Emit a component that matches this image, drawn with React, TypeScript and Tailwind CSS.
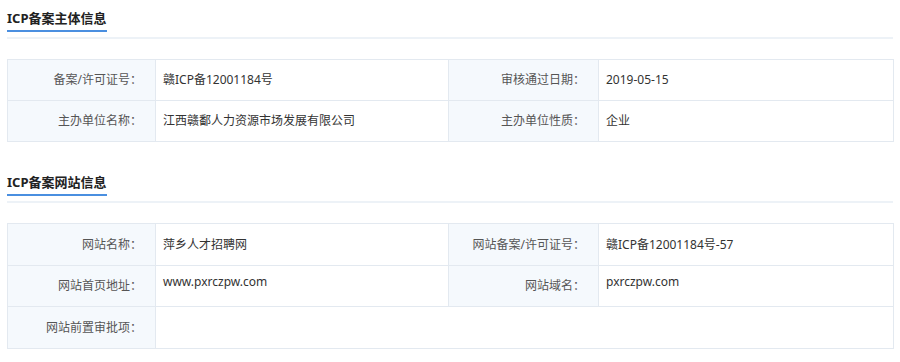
const font = { fontFamily: '"Noto Sans", "Noto Sans CJK SC", sans-serif' };

function SectionTitle({ title }: { title: string }) {
	return (
		<div>
			<div className="pt-[8px]">
				<div className="w-[100px] whitespace-nowrap border-b-2 border-[#4a8fe0] pb-[2px] text-[13px] leading-[20px] font-bold text-[#222]">
					{title}
				</div>
			</div>
			<div className="mt-[5px] h-[2px] bg-[#edf2f7]" />
		</div>
	);
}

const labelCls =
	"border border-[#e3e9f0] bg-[#f5f9fd] pr-[13px] text-right text-[12px] font-normal text-[#555]";
const valueCls = "border border-[#e3e9f0] bg-white pl-[7px] text-left text-[12px] text-[#333]";

export default function App() {
	return (
		<div className="h-[362px] w-[900px] bg-white px-[7px]" style={font}>
			<SectionTitle title="ICP备案主体信息" />

			<table className="mt-[20px] w-[886px] table-fixed border-collapse">
				<colgroup>
					<col className="w-[148px]" />
					<col className="w-[293px]" />
					<col className="w-[150px]" />
					<col className="w-[295px]" />
				</colgroup>
				<tbody>
					<tr className="h-[41px]">
						<td className={labelCls}>备案/许可证号：</td>
						<td className={valueCls}>赣ICP备12001184号</td>
						<td className={labelCls}>审核通过日期：</td>
						<td className={valueCls}>2019-05-15</td>
					</tr>
					<tr className="h-[41px]">
						<td className={labelCls}>主办单位名称：</td>
						<td className={valueCls}>江西赣鄱人力资源市场发展有限公司</td>
						<td className={labelCls}>主办单位性质：</td>
						<td className={valueCls}>企业</td>
					</tr>
				</tbody>
			</table>

			<div className="mt-[22px]">
				<SectionTitle title="ICP备案网站信息" />
			</div>

			<table className="mt-[20px] w-[886px] table-fixed border-collapse">
				<colgroup>
					<col className="w-[148px]" />
					<col className="w-[293px]" />
					<col className="w-[150px]" />
					<col className="w-[295px]" />
				</colgroup>
				<tbody>
					<tr className="h-[42px]">
						<td className={labelCls}>网站名称：</td>
						<td className={valueCls}>萍乡人才招聘网</td>
						<td className={labelCls}>网站备案/许可证号：</td>
						<td className={valueCls}>赣ICP备12001184号-57</td>
					</tr>
					<tr className="h-[41px]">
						<td className={labelCls}>网站首页地址：</td>
						<td className={`${valueCls} pb-[8px]`}>www.pxrczpw.com</td>
						<td className={labelCls}>网站域名：</td>
						<td className={`${valueCls} pb-[8px]`}>pxrczpw.com</td>
					</tr>
					<tr className="h-[42px]">
						<td className={labelCls}>网站前置审批项：</td>
						<td className={valueCls} colSpan={3}></td>
					</tr>
				</tbody>
			</table>
		</div>
	);
}
